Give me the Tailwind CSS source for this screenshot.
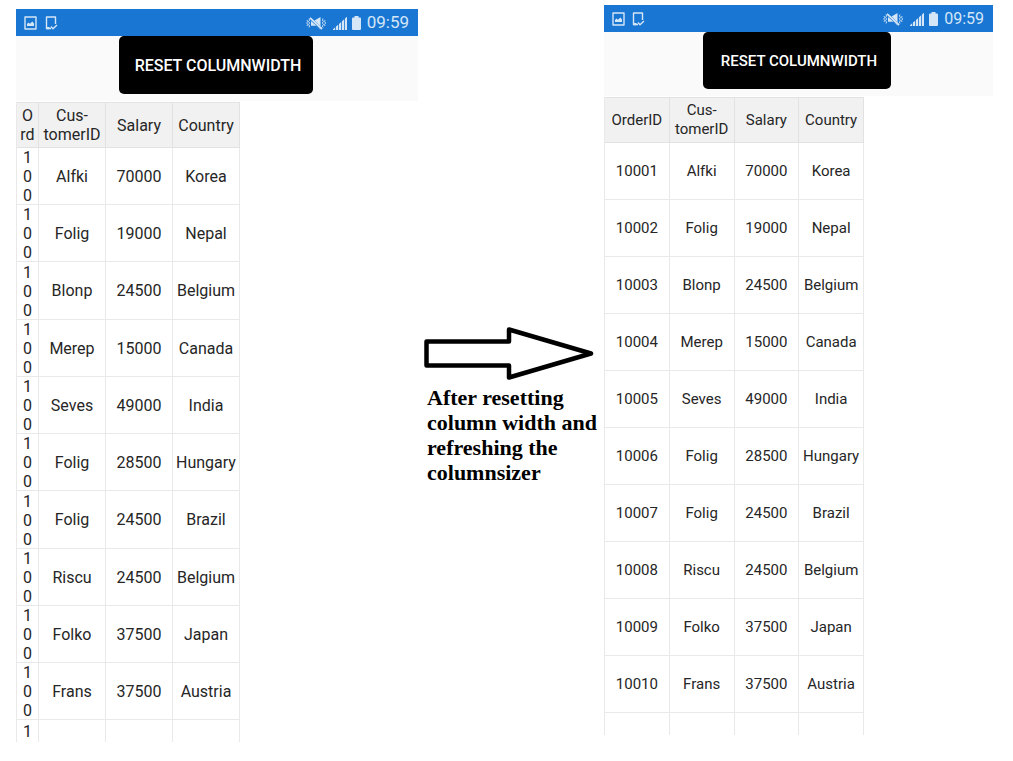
<!DOCTYPE html>
<html lang="en">
<head>
<meta charset="utf-8">
<meta name="viewport" content="width=device-width, initial-scale=1">
<title>Reset column width</title>
<script src="https://cdn.jsdelivr.net/npm/@tailwindcss/browser@4"></script>
</head>
<body class="bg-white text-[#262626]">
<svg class="hidden" aria-hidden="true">
  <symbol id="picture" viewBox="0 0 13 14"><path fill="none" stroke="currentColor" stroke-width="1.4" stroke-linejoin="round" d="M1 1H12V13H1Z"/><path fill="currentColor" d="M3 10V8L4.500 6.500L6 7.700L8.300 5.500L10 7.500V10Z"/></symbol>
  <symbol id="device" viewBox="0 0 13 14"><path fill="none" stroke="currentColor" stroke-width="1.4" stroke-linejoin="round" d="M10.500 8V1H1.500V12.500H6M6 10.500L8 12.700L12 9"/><path fill="currentColor" d="M1 11H4.500V13.200H1Z"/></symbol>
  <symbol id="mute" viewBox="0 0 21 14"><path fill="currentColor" d="M5 5L10.500 9.800H5ZM8.500 4.500L14.500 1V10.200ZM10 9.500L14.500 13.200H14Z"/><path stroke="currentColor" stroke-width="1.800" d="M4 1.800L16 13"/><path fill="none" stroke="currentColor" stroke-width=".9" d="M3 2.500L3.600 4L2.600 5.500L3.600 7L2.600 8.500L3.600 10L3 11.500M1 4L1.600 5.500L.8 7L1.600 8.500L1 10M17 2.500L16.400 4L17.400 5.500L16.400 7L17.400 8.500L16.400 10L17 11.500M19 4L18.600 5.500L19.600 7L18.600 8.500L19 10"/></symbol>
  <symbol id="signal" viewBox="0 0 14 14"><path fill="currentColor" d="M0 14V13.200L2.200 11.300V14ZM3 14V10.600L5.200 8.700V14ZM6 14V7.900L8.200 6V14ZM9 14V5.200L11.200 3.200V14ZM12 14V2.500L14 .8V14Z"/></symbol>
  <symbol id="battery" viewBox="0 0 9 14"><path fill="currentColor" d="M2.500 0H6.500V1.500H8Q9 1.500 9 2.500V13Q9 14 8 14H1Q0 14 0 13V2.500Q0 1.500 1 1.500H2.500Z"/></symbol>
</svg>

<main class="grid grid-cols-[402fr_186fr_389fr] items-start pl-4 pr-5">
  <section class="pt-[9px] font-[Roboto,sans-serif] text-base leading-[19px]" aria-label="Before reset">
    <div class="flex h-[27px] items-center bg-[#1976d2] pl-2 pr-[9px] text-[#d5e6f7]">
      <svg class="h-[14px] w-[13px]"><use href="#picture"/></svg>
      <svg class="ml-2 h-[14px] w-[13px]"><use href="#device"/></svg>
      <svg class="ml-auto h-[14px] w-[21px]"><use href="#mute"/></svg>
      <svg class="ml-[6px] h-[14px] w-[14px]"><use href="#signal"/></svg>
      <svg class="ml-[5px] h-[14px] w-[9px]"><use href="#battery"/></svg>
      <time class="ml-[6px] text-[17px]">09:59</time>
    </div>
    <div class="flex justify-center bg-[#fafafa] pr-[2px] pb-[7px]">
      <button type="button" class="h-[58px] w-[194px] rounded-[5px] bg-black pt-px pl-1 font-medium whitespace-nowrap text-white">RESET COLUMNWIDTH</button>
    </div>
    <table class="mt-px w-[224px] table-fixed border-separate border-spacing-0 border-l border-[#e9e9e9] text-center [&_td]:border-b [&_td]:border-r [&_td]:border-[#e9e9e9] [&_td]:p-0 [&_th]:border-b [&_th]:border-r [&_th]:border-t [&_th]:border-[#e2e2e2] [&_th]:p-0 [&_th]:font-normal">
      <colgroup><col class="w-[22px]"><col class="w-[67px]"><col class="w-[67px]"><col class="w-[67px]"></colgroup>
      <thead class="bg-[#f1f1f1]"><tr class="h-[46px]"><th scope="col">O<br>rd</th><th scope="col">Cus-<br>tomerID</th><th scope="col">Salary</th><th scope="col">Country</th></tr></thead>
      <tbody id="before"></tbody>
    </table>
  </section>

  <aside class="pl-[6px] pt-[326px]">
    <svg class="h-[54px] w-[170px]" viewBox="0 0 170 54" role="img" aria-label="Leads to"><path fill="none" stroke="#000" stroke-width="4.500" stroke-linejoin="round" d="M2.500 15.500H85V3.500L167 27.500L85 51.500V39.500H2.500Z"/></svg>
    <p class="mt-[5px] pl-[3px] font-['Liberation_Serif',serif] text-[22px] leading-[25px] font-bold whitespace-nowrap text-black">After resetting<br>column width and<br>refreshing the<br>columnsizer</p>
  </aside>

  <section class="pt-[5px] font-[Roboto,sans-serif] text-[15px] leading-[19px]" aria-label="After reset">
    <div class="flex h-[27px] items-center bg-[#1976d2] pl-2 pr-[9px] text-[#d5e6f7]">
      <svg class="h-[14px] w-[13px]"><use href="#picture"/></svg>
      <svg class="ml-[7px] h-[14px] w-[13px]"><use href="#device"/></svg>
      <svg class="ml-auto h-[14px] w-[21px]"><use href="#mute"/></svg>
      <svg class="ml-[6px] h-[14px] w-[14px]"><use href="#signal"/></svg>
      <svg class="ml-[5px] h-[14px] w-[9px]"><use href="#battery"/></svg>
      <time class="ml-[6px] text-base">09:59</time>
    </div>
    <div class="flex justify-center bg-[#fafafa] pr-[3px] pb-[7px]">
      <button type="button" class="h-[57px] w-[188px] rounded-[5px] bg-black pt-[2px] pl-1 font-medium whitespace-nowrap text-white">RESET COLUMNWIDTH</button>
    </div>
    <table class="mt-px w-[260px] table-fixed border-separate border-spacing-0 border-l border-[#e9e9e9] text-center [&_td]:border-b [&_td]:border-r [&_td]:border-[#e9e9e9] [&_td]:p-0 [&_th]:border-b [&_th]:border-r [&_th]:border-t [&_th]:border-[#e2e2e2] [&_th]:p-0 [&_th]:font-normal">
      <thead class="bg-[#f1f1f1]"><tr class="h-[46px]"><th scope="col">OrderID</th><th scope="col">Cus-<br>tomerID</th><th scope="col">Salary</th><th scope="col">Country</th></tr></thead>
      <tbody id="after"></tbody>
    </table>
  </section>
</main>

<script>
const orders = [
  ['10001', 'Alfki', '70000', 'Korea'],
  ['10002', 'Folig', '19000', 'Nepal'],
  ['10003', 'Blonp', '24500', 'Belgium'],
  ['10004', 'Merep', '15000', 'Canada'],
  ['10005', 'Seves', '49000', 'India'],
  ['10006', 'Folig', '28500', 'Hungary'],
  ['10007', 'Folig', '24500', 'Brazil'],
  ['10008', 'Riscu', '24500', 'Belgium'],
  ['10009', 'Folko', '37500', 'Japan'],
  ['10010', 'Frans', '37500', 'Austria'],
];
const cells = values => values.map(v => `<td>${v}</td>`).join('');

document.getElementById('before').innerHTML = orders.map(([id, ...rest]) =>
  `<tr class="h-[57px] nth-[4n+3]:h-[58px]"><td><div class="mx-auto h-[56px] w-[10px] break-all">${id.slice(0, 3)}</div></td>${cells(rest)}</tr>`
).join('') + '<tr class="h-[22px] [&>td]:border-b-0"><td>1</td><td></td><td></td><td></td></tr>';

document.getElementById('after').innerHTML = orders.map(o =>
  `<tr class="h-[57px]">${cells(o)}</tr>`
).join('') + '<tr class="h-[22px] [&>td]:border-b-0"><td></td><td></td><td></td><td></td></tr>';
</script>
</body>
</html>
